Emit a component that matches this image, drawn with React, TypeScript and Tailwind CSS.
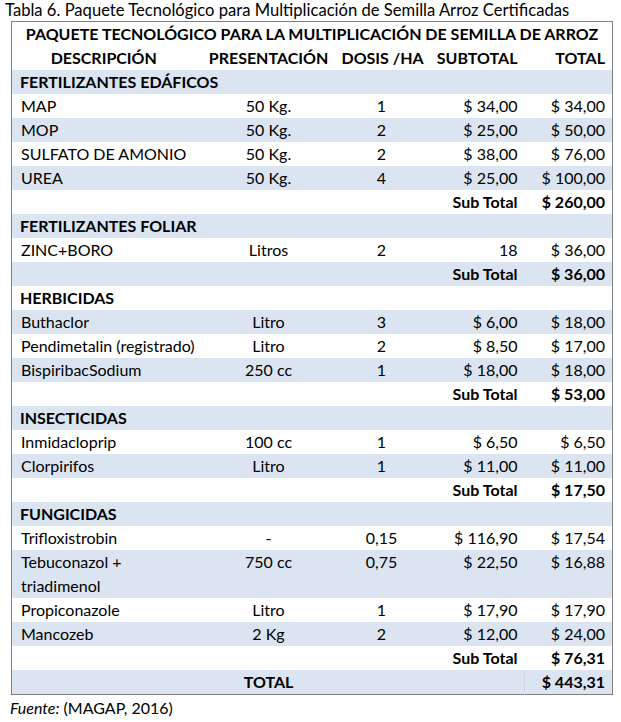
type Row = {
  kind: "section" | "item" | "sub" | "total";
  desc?: string[];
  pres?: string;
  dosis?: string;
  sub?: string;
  total?: string;
};

const rows: Row[] = [
  { kind: "section", desc: ["FERTILIZANTES EDÁFICOS"] },
  { kind: "item", desc: ["MAP"], pres: "50 Kg.", dosis: "1", sub: "$ 34,00", total: "$ 34,00" },
  { kind: "item", desc: ["MOP"], pres: "50 Kg.", dosis: "2", sub: "$ 25,00", total: "$ 50,00" },
  { kind: "item", desc: ["SULFATO DE AMONIO"], pres: "50 Kg.", dosis: "2", sub: "$ 38,00", total: "$ 76,00" },
  { kind: "item", desc: ["UREA"], pres: "50 Kg.", dosis: "4", sub: "$ 25,00", total: "$ 100,00" },
  { kind: "sub", total: "$ 260,00" },
  { kind: "section", desc: ["FERTILIZANTES FOLIAR"] },
  { kind: "item", desc: ["ZINC+BORO"], pres: "Litros", dosis: "2", sub: "18", total: "$ 36,00" },
  { kind: "sub", total: "$ 36,00" },
  { kind: "section", desc: ["HERBICIDAS"] },
  { kind: "item", desc: ["Buthaclor"], pres: "Litro", dosis: "3", sub: "$ 6,00", total: "$ 18,00" },
  { kind: "item", desc: ["Pendimetalin (registrado)"], pres: "Litro", dosis: "2", sub: "$ 8,50", total: "$ 17,00" },
  { kind: "item", desc: ["BispiribacSodium"], pres: "250 cc", dosis: "1", sub: "$ 18,00", total: "$ 18,00" },
  { kind: "sub", total: "$ 53,00" },
  { kind: "section", desc: ["INSECTICIDAS"] },
  { kind: "item", desc: ["Inmidacloprip"], pres: "100 cc", dosis: "1", sub: "$ 6,50", total: "$ 6,50" },
  { kind: "item", desc: ["Clorpirifos"], pres: "Litro", dosis: "1", sub: "$ 11,00", total: "$ 11,00" },
  { kind: "sub", total: "$ 17,50" },
  { kind: "section", desc: ["FUNGICIDAS"] },
  { kind: "item", desc: ["Trifloxistrobin"], pres: "-", dosis: "0,15", sub: "$ 116,90", total: "$ 17,54" },
  { kind: "item", desc: ["Tebuconazol +", "triadimenol"], pres: "750 cc", dosis: "0,75", sub: "$ 22,50", total: "$ 16,88" },
  { kind: "item", desc: ["Propiconazole"], pres: "Litro", dosis: "1", sub: "$ 17,90", total: "$ 17,90" },
  { kind: "item", desc: ["Mancozeb"], pres: "2 Kg", dosis: "2", sub: "$ 12,00", total: "$ 24,00" },
  { kind: "sub", total: "$ 76,31" },
  { kind: "total", total: "$ 443,31" },
];

function BodyRow({ row, index }: { row: Row; index: number }) {
  const bg = index % 2 === 0 ? "bg-[#dbe5f1]" : "bg-white";
  const cell = "h-6 p-0 align-top leading-6 whitespace-nowrap";

  if (row.kind === "section") {
    return (
      <tr className={bg}>
        <td colSpan={5} className={`${cell} pl-2 font-bold`}>
          {row.desc?.[0]}
        </td>
      </tr>
    );
  }

  if (row.kind === "sub") {
    return (
      <tr className={bg}>
        <td colSpan={3} className={cell}></td>
        <td className={`${cell} pr-[7px] text-right font-bold`}>Sub Total</td>
        <td className={`${cell} pr-[7px] text-right font-bold`}>{row.total}</td>
      </tr>
    );
  }

  if (row.kind === "total") {
    return (
      <tr className={bg}>
        <td className={cell}></td>
        <td className={`${cell} text-center font-bold`}>TOTAL</td>
        <td colSpan={2} className={cell}></td>
        <td className={`${cell} pr-[7px] text-right font-bold border-l border-[#d4d8dc]`}>{row.total}</td>
      </tr>
    );
  }

  return (
    <tr className={bg}>
      <td className={`${cell} pl-[9px]`}>
        {row.desc?.map((line) => (
          <div key={line}>{line}</div>
        ))}
      </td>
      <td className={`${cell} text-center`}>{row.pres}</td>
      <td className={`${cell} text-center`}>{row.dosis}</td>
      <td className={`${cell} pr-[7px] text-right`}>{row.sub}</td>
      <td className={`${cell} pr-[7px] text-right`}>{row.total}</td>
    </tr>
  );
}

export default function App() {
  return (
    <div className="w-[621px] h-[722px] bg-white text-black text-[16px] font-['Lato',_sans-serif]">
      <p className="pl-[5px] leading-[21px] text-[16.6px]">
        Tabla 6. Paquete Tecnológico para Multiplicación de Semilla Arroz Certificadas
      </p>
      <div className="pl-[11px]">
        <table className="w-[601px] table-fixed border-collapse border border-[#7f7f7f]">
          <colgroup>
            <col className="w-[184px]" />
            <col className="w-[146px]" />
            <col className="w-[80px]" />
            <col className="w-[103px]" />
            <col className="w-[88px]" />
          </colgroup>
          <thead>
            <tr>
              <th colSpan={5} className="h-6 p-0 leading-6 text-center font-bold whitespace-nowrap">
                PAQUETE TECNOLÓGICO PARA LA MULTIPLICACIÓN DE SEMILLA DE ARROZ
              </th>
            </tr>
            <tr>
              <th className="h-6 p-0 leading-6 text-center font-bold">DESCRIPCIÓN</th>
              <th className="h-6 p-0 leading-6 text-center font-bold whitespace-nowrap">PRESENTACIÓN</th>
              <th className="h-6 p-0 leading-6 text-center font-bold whitespace-nowrap">DOSIS /HA</th>
              <th className="h-6 p-0 leading-6 text-right pr-[7px] font-bold">SUBTOTAL</th>
              <th className="h-6 p-0 leading-6 text-right pr-[7px] font-bold">TOTAL</th>
            </tr>
          </thead>
          <tbody>
            {rows.map((row, i) => (
              <BodyRow key={i} row={row} index={i} />
            ))}
          </tbody>
        </table>
      </div>
      <p className="pl-[10px] pt-[1px] leading-6">
        <span className="italic">Fuente:</span> (MAGAP, 2016)
      </p>
    </div>
  );
}
